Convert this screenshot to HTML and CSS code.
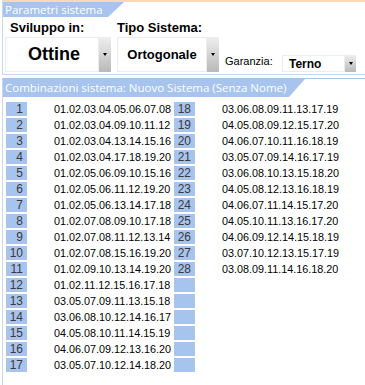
FILE: index.html
```html
<!DOCTYPE html>
<html>
<head>
<meta charset="utf-8">
<link rel="stylesheet" href="styles.css">
</head>
<body>
<div class="panel params">
  <div class="tab tab-params">Parametri sistema</div>
  <div class="controls">
    <div class="group group-svil">
      <div class="label label-svil">Sviluppo in:</div>
      <div class="select select-big">
        <div class="select-value value-ottine">Ottine</div>
        <div class="select-btn"><span class="arrow"></span></div>
      </div>
    </div>
    <div class="group group-tipo">
      <div class="label">Tipo Sistema:</div>
      <div class="select select-big select-tipo">
        <div class="select-value value-orto">Ortogonale</div>
        <div class="select-btn"><span class="arrow"></span></div>
      </div>
    </div>
    <div class="group-gar">
      <span class="gar-label">Garanzia:</span>
      <div class="select select-small">
        <div class="select-value value-terno">Terno</div>
        <div class="select-btn"><span class="arrow"></span></div>
      </div>
    </div>
  </div>
</div>
<div class="panel combos">
  <div class="tab tab-combos">Combinazioni sistema: Nuovo Sistema (Senza Nome)</div>
  <div class="grid">
    <div class="num">1</div><div class="combo">01.02.03.04.05.06.07.08</div><div class="num">18</div><div class="combo">03.06.08.09.11.13.17.19</div>
    <div class="num">2</div><div class="combo">01.02.03.04.09.10.11.12</div><div class="num">19</div><div class="combo">04.05.08.09.12.15.17.20</div>
    <div class="num">3</div><div class="combo">01.02.03.04.13.14.15.16</div><div class="num">20</div><div class="combo">04.06.07.10.11.16.18.19</div>
    <div class="num">4</div><div class="combo">01.02.03.04.17.18.19.20</div><div class="num">21</div><div class="combo">03.05.07.09.14.16.17.19</div>
    <div class="num">5</div><div class="combo">01.02.05.06.09.10.15.16</div><div class="num">22</div><div class="combo">03.06.08.10.13.15.18.20</div>
    <div class="num">6</div><div class="combo">01.02.05.06.11.12.19.20</div><div class="num">23</div><div class="combo">04.05.08.12.13.16.18.19</div>
    <div class="num">7</div><div class="combo">01.02.05.06.13.14.17.18</div><div class="num">24</div><div class="combo">04.06.07.11.14.15.17.20</div>
    <div class="num">8</div><div class="combo">01.02.07.08.09.10.17.18</div><div class="num">25</div><div class="combo">04.05.10.11.13.16.17.20</div>
    <div class="num">9</div><div class="combo">01.02.07.08.11.12.13.14</div><div class="num">26</div><div class="combo">04.06.09.12.14.15.18.19</div>
    <div class="num">10</div><div class="combo">01.02.07.08.15.16.19.20</div><div class="num">27</div><div class="combo">03.07.10.12.13.15.17.19</div>
    <div class="num">11</div><div class="combo">01.02.09.10.13.14.19.20</div><div class="num">28</div><div class="combo">03.08.09.11.14.16.18.20</div>
    <div class="num">12</div><div class="combo">01.02.11.12.15.16.17.18</div><div class="num"></div><div class="combo"></div>
    <div class="num">13</div><div class="combo">03.05.07.09.11.13.15.18</div><div class="num"></div><div class="combo"></div>
    <div class="num">14</div><div class="combo">03.06.08.10.12.14.16.17</div><div class="num"></div><div class="combo"></div>
    <div class="num">15</div><div class="combo">04.05.08.10.11.14.15.19</div><div class="num"></div><div class="combo"></div>
    <div class="num">16</div><div class="combo">04.06.07.09.12.13.16.20</div><div class="num"></div><div class="combo"></div>
    <div class="num">17</div><div class="combo">03.05.07.10.12.14.18.20</div><div class="num"></div><div class="combo"></div>
  </div>
</div>
</body>
</html>
```
FILE: styles.css
```css
html, body {
  margin: 0;
  padding: 0;
  background: #ffffff;
  width: 365px;
  height: 385px;
  overflow: hidden;
}
body {
  font-family: "Liberation Sans", Arial, sans-serif;
  color: #000;
}
.panel {
  margin-left: 2px;
  border-left: 1px solid #c6d8f0;
  width: 363px;
  box-sizing: border-box;
}
.params {
  border-top: 2px solid #f7dab5;
  border-bottom: 1px solid #c6d8f0;
  height: 75px;
}
.tab {
  background: #a7c4ee;
  color: #fff;
  font-family: "Open Sans", sans-serif;
  font-size: 11.5px;
  padding-left: 2px;
  box-sizing: border-box;
  clip-path: polygon(0 0, 100% 0, calc(100% - 16px) 100%, 0 100%);
  white-space: nowrap;
  overflow: hidden;
}
.tab-params {
  width: 121px;
  height: 15px;
  line-height: 15px;
}
.controls {
  display: flex;
  align-items: flex-end;
  padding-top: 3px;
}
.group {
  display: flex;
  flex-direction: column;
}
.group-svil {
  margin-left: 2px;
}
.group-tipo {
  margin-left: 6px;
}
.label {
  font-size: 13px;
  font-weight: bold;
  line-height: 15px;
  height: 15px;
  margin-bottom: 2px;
  white-space: nowrap;
}
.label-svil {
  padding-left: 5px;
}
.select {
  display: flex;
  background: #fff;
}
.select-value {
  border: 1px solid #ececec;
  display: flex;
  align-items: center;
  font-weight: bold;
  box-sizing: border-box;
}
.select-big {
  height: 35px;
}
.select-big .select-value {
  width: 94px;
  justify-content: center;
}
.select-tipo .select-value {
  width: 90px;
}
.value-ottine {
  font-size: 18px;
  padding-left: 4px;
}
.value-orto {
  font-size: 13px;
}
.select-btn {
  width: 12px;
  background: linear-gradient(#efefef, #b9b9b9);
  display: flex;
  align-items: center;
  justify-content: center;
}
.arrow {
  width: 0;
  height: 0;
  border-left: 2.5px solid transparent;
  border-right: 2.5px solid transparent;
  border-top: 3px solid #000;
}
.group-gar {
  display: flex;
  align-items: flex-end;
  margin-left: 6px;
}
.gar-label {
  font-size: 11px;
  line-height: 13px;
  margin-bottom: 4px;
  width: 57px;
}
.select-small {
  height: 17px;
}
.select-small .select-value {
  width: 63px;
  font-size: 12px;
  padding-left: 6px;
}
.select-small .select-btn {
  width: 11px;
}
.combos {
  margin-top: 3px;
  border-top: 1px solid #a7c4ee;
  height: 320px;
}
.tab-combos {
  width: 302px;
  height: 18px;
  line-height: 18px;
}
.grid {
  display: grid;
  grid-template-columns: 21px 147px 21px 1fr;
  grid-auto-rows: 14px;
  row-gap: 2px;
  padding-top: 5px;
  padding-left: 3px;
  font-size: 10.8px;
  line-height: 14px;
}
.num {
  background: #a7c4ee;
  text-align: right;
  padding-right: 4px;
  color: #3a3a3a;
  font-size: 12px;
}
.combo {
  padding-left: 27px;
  white-space: nowrap;
  overflow: hidden;
}
```
